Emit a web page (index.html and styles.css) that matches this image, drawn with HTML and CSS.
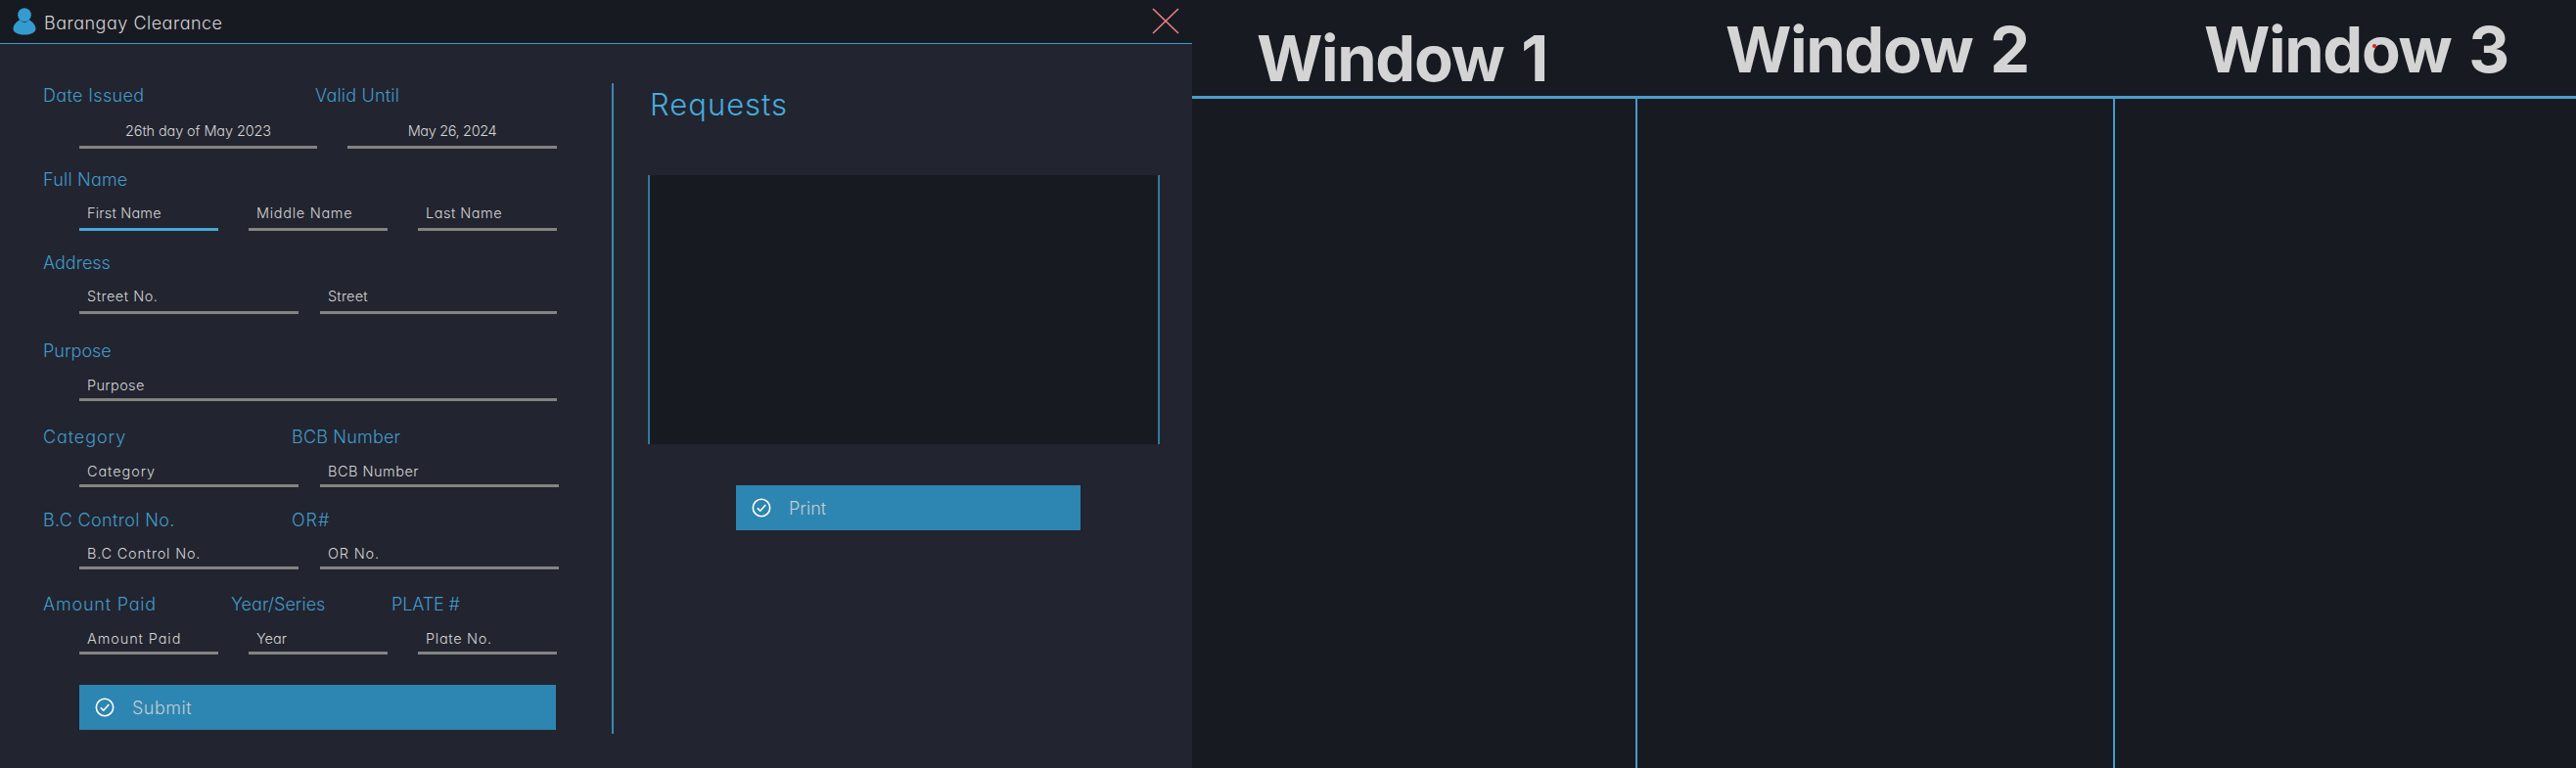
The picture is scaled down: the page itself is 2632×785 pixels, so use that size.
FILE: index.html
```html
<!DOCTYPE html>
<html lang="en">
<head>
<meta charset="utf-8">
<title>Barangay Clearance</title>
<link rel="stylesheet" href="styles.css">
</head>
<body>
<main class="desktop">
  <section class="app">
    <header class="titlebar">
      <svg class="user" viewBox="0 0 24 28"><path d="M7.500 12.200C3.500 14 .5 18 .5 21.500C.5 25.500 6.500 27.500 12 27.500S23.500 25.500 23.500 21.500C23.500 18 20.500 14 16.500 12.200Q12 18 7.500 12.200Z"/><ellipse cx="12" cy="7.300" rx="6.800" ry="7"/></svg>
      <h1 class="title track-5">Barangay Clearance</h1>
      <svg class="close" viewBox="0 0 28 27"><path d="M1 1L27 26M27 1L1 26"/></svg>
    </header>
    <div class="content">
      <form class="form">
        <div class="group dates">
          <div class="labels"><label class="wide track-4">Date Issued</label><label class="track-2">Valid Until</label></div>
          <div class="fields"><div class="field centered issued tight-1">26th day of May 2023</div><div class="field centered until tight-4">May 26, 2024</div></div>
        </div>
        <div class="group name">
          <div class="labels"><label class="track-2">Full Name</label></div>
          <div class="fields"><div class="field third active track-2">First Name</div><div class="field third track-7">Middle Name</div><div class="field third track-5">Last Name</div></div>
        </div>
        <div class="group address">
          <div class="labels"><label>Address</label></div>
          <div class="fields paired"><div class="field half track-5">Street No.</div><div class="field street track-2">Street</div></div>
        </div>
        <div class="group purpose">
          <div class="labels"><label>Purpose</label></div>
          <div class="fields"><div class="field full track-4">Purpose</div></div>
        </div>
        <div class="group category">
          <div class="labels"><label class="mid track-9">Category</label><label class="track-2">BCB Number</label></div>
          <div class="fields paired"><div class="field half track-9">Category</div><div class="field rest track-5">BCB Number</div></div>
        </div>
        <div class="group control">
          <div class="labels"><label class="mid track-4">B.C Control No.</label><label class="track-9">OR#</label></div>
          <div class="fields paired"><div class="field half track-8">B.C Control No.</div><div class="field rest track-8">OR No.</div></div>
        </div>
        <div class="group payment">
          <div class="labels"><label class="paid track-8">Amount Paid</label><label class="series">Year/Series</label><label class="tight-1">PLATE #</label></div>
          <div class="fields"><div class="field third track-9">Amount Paid</div><div class="field third">Year</div><div class="field third track-7">Plate No.</div></div>
        </div>
        <button type="button" class="btn submit track-5"><svg class="check" viewBox="0 0 20 20"><circle cx="10" cy="10" r="8.700"/><path d="M5.800 10.300L8.800 13.200L14.300 7"/></svg>Submit</button>
      </form>
      <section class="requests">
        <h2>Requests</h2>
        <div class="list"></div>
        <button type="button" class="btn print"><svg class="check" viewBox="0 0 20 20"><circle cx="10" cy="10" r="8.700"/><path d="M5.800 10.300L8.800 13.200L14.300 7"/></svg>Print</button>
      </section>
    </div>
  </section>
  <section class="queue">
    <div class="window first"><h2>Window 1</h2><div class="pane"></div></div>
    <div class="window second"><h2>Window 2</h2><div class="pane"></div></div>
    <div class="window last"><h2>Window 3</h2><i class="dot"></i><div class="pane"></div></div>
  </section>
</main>
</body>
</html>
```
FILE: styles.css
```css
* { box-sizing: border-box; }
body {
  margin: 0;
  background: #181a22;
  color: #d4d4d4;
  font-family: Inter, Lato, sans-serif;
  font-feature-settings: "cv11";
  font-weight: 300;
}
h1, h2 { margin: 0; font-weight: inherit; }
h1, h2, label, .field { white-space: nowrap; }
.desktop { display: flex; width: 2632px; height: 785px; overflow: hidden; }
.app { width: 1218px; background: #222430; }
.titlebar {
  display: flex;
  align-items: flex-start;
  height: 45px;
  padding: 8px 13px 0 13px;
  border-bottom: 1px solid #389bc7;
  background: #181a22;
}
.user { width: 24px; height: 28px; fill: #349bd0; }
.title { flex: 1; padding: 4px 0 0 8px; font-size: 18px; line-height: 24px; }
.close { width: 28px; height: 27px; fill: none; stroke: #f08585; stroke-width: 1.5; }
.content { display: flex; height: 740px; padding-top: 40px; }
.form { width: 627px; height: 665px; padding-left: 44px; border-right: 2px solid #3b87b0; }
.group { display: flex; flex-direction: column; justify-content: space-between; }
.dates { margin-top: 1px; height: 66px; }
.name { margin-top: 20px; height: 64px; }
.address { margin-top: 21px; height: 64px; }
.purpose { margin-top: 26px; height: 63px; }
.category { margin-top: 25px; height: 63px; }
.control { margin-top: 22px; height: 62px; }
.payment { margin-top: 24px; height: 63px; }
.labels { display: flex; color: #419bc9; font-size: 18px; line-height: 24px; }
.wide { width: 278px; }
.mid { width: 254px; }
.paid { width: 192px; }
.series { width: 164px; }
.fields { display: flex; gap: 31px; padding-left: 37px; }
.paired { gap: 22px; }
.field {
  height: 26px;
  padding-left: 8px;
  border-bottom: 3px solid #838382;
  font-size: 14.5px;
  line-height: 20px;
}
.dates .field, .name .field, .address .field { height: 28px; }
.field.centered { padding: 0; text-align: center; }
.issued { width: 243px; }
.until { width: 214px; }
.third { width: 142px; }
.half { width: 224px; }
.street { width: 242px; }
.rest { width: 244px; }
.full { width: 488px; }
.field.active { border-color: #45a9d8; }
.btn {
  display: flex;
  align-items: center;
  height: 46px;
  padding: 0 0 0 16px;
  border: 0;
  background: #2d85b1;
  color: #c6ccd0;
  font: inherit;
  font-size: 18px;
  font-feature-settings: "cv11";
}
.check { width: 20px; height: 20px; margin-right: 18px; fill: none; stroke: #fff; stroke-width: 1.6; }
.submit { width: 487px; margin: 31px 0 0 37px; }
.requests { padding-left: 35px; }
.requests h2 { padding-left: 2px; color: #46acdc; font-size: 31px; line-height: 44px; letter-spacing: 1px; }
.list {
  width: 523px;
  height: 275px;
  margin-top: 50px;
  border: solid #33799d;
  border-width: 0 2px;
  background: #181a22;
}
.print { width: 352px; margin: 42px 0 0 90px; }
.queue { display: flex; flex: 1; }
.window { position: relative; display: flex; flex-direction: column; }
.window h2 {
  height: 101px;
  border-bottom: 3px solid #4a9dca;
  font-size: 65px;
  font-weight: 700;
  line-height: 80px;
  letter-spacing: -1.4px;
  word-spacing: 4px;
}
.first { width: 455px; }
.second { width: 488px; }
.last { flex: 1; }
.first h2 { padding: 20px 0 0 66px; }
.second h2 { padding: 11px 0 0 90px; }
.last h2 { padding: 11px 0 0 91px; }
.pane { flex: 1; border-right: 2px solid #449bc9; }
.last .pane { border: 0; }
.dot { position: absolute; left: 263px; top: 45px; width: 4px; height: 4px; border-radius: 50%; background: #f01818; }
.tight-4 { letter-spacing: -.35px; }
.tight-1 { letter-spacing: -.12px; }
.track-2 { letter-spacing: .2px; }
.track-4 { letter-spacing: .35px; }
.track-5 { letter-spacing: .5px; }
.track-7 { letter-spacing: .7px; }
.track-8 { letter-spacing: .8px; }
.track-9 { letter-spacing: .9px; }
```
